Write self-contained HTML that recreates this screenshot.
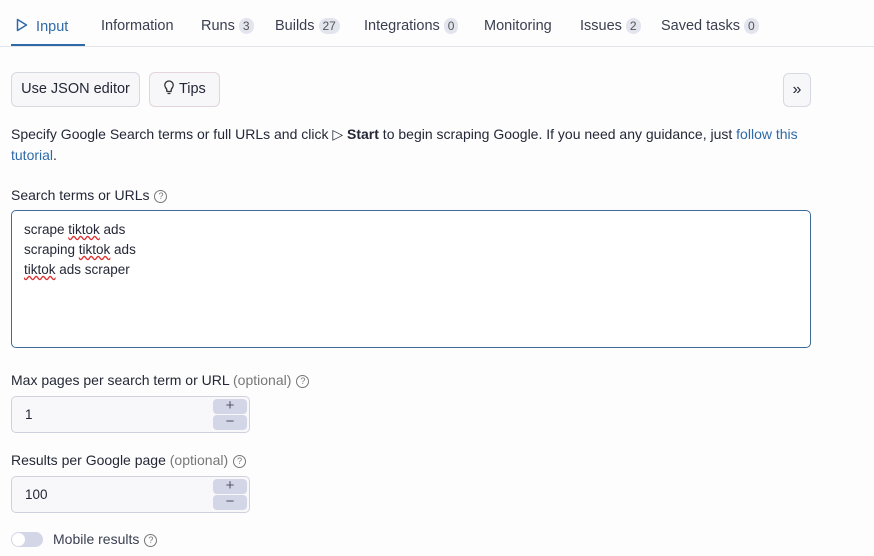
<!DOCTYPE html><html><head><style>
body{margin:0;width:874px;height:556px;background:#fdfdfe;font-family:"Liberation Sans",sans-serif;color:#242836;position:relative;overflow:hidden;font-size:14px}
.a{position:absolute;white-space:nowrap}
.tab{position:absolute;top:18px;font-size:14.5px;color:#3a3f4f}
.b{display:inline-block;background:#e2e4ee;color:#555;font-size:12px;border-radius:8px;padding:1px 4px;margin-left:4px}
.btn{position:absolute;border:1px solid #d6d9e2;border-radius:6px;background:#f7f7fa;font-size:14.5px;box-sizing:border-box}
.q{display:inline-block;width:11px;height:11px;border:1px solid #777;border-radius:50%;font-size:9px;text-align:center;line-height:11px;color:#777;vertical-align:1px;margin-left:5px}
.num{position:absolute;left:11px;width:239px;height:37px;border:1px solid #cfd2dc;border-radius:5px;background:#f8f8fb;box-sizing:border-box}
.sp{position:absolute;right:2px;width:34px;height:15px;background:#d3d6e6;border-radius:4px;color:#556;text-align:center;font-size:15px;line-height:14px}
.opt{color:#777}
</style></head><body>
<div class="tab" style="left:16px;color:#2f6aa8"><svg width="12" height="14" viewBox="0 0 12 14" style="vertical-align:-1px"><path d="M1.5 1.5L10.5 7L1.5 12.5Z" fill="none" stroke="#2f6aa8" stroke-width="1.5" stroke-linejoin="round"/></svg>&nbsp; Input</div>
<div style="position:absolute;left:11px;top:44px;width:74px;height:3px;background:#2f6aa8"></div>
<div style="position:absolute;left:0;top:46px;width:874px;height:1px;background:#e3e5eb"></div>
<div class="tab" style="left:101px">Information</div>
<div class="tab" style="left:201px">Runs<span class="b">3</span></div>
<div class="tab" style="left:275px">Builds<span class="b">27</span></div>
<div class="tab" style="left:364px">Integrations<span class="b">0</span></div>
<div class="tab" style="left:484px">Monitoring</div>
<div class="tab" style="left:580px">Issues<span class="b">2</span></div>
<div class="tab" style="left:661px">Saved tasks<span class="b">0</span></div>
<div class="btn" style="left:11px;top:72px;width:129px;height:35px;line-height:33px;text-align:center">Use JSON editor</div>
<div class="btn" style="left:149px;top:72px;width:71px;height:35px;line-height:33px;text-align:center;border-color:#e4d4dc"><svg width="12" height="15" viewBox="0 0 12 15" style="vertical-align:-2px"><path d="M4 11.5Q4 9 2.5 7.5A4.2 4.2 0 1 1 9.5 7.5Q8 9 8 11.5ZM4.5 13.5H7.5" fill="none" stroke="#333" stroke-width="1.3"/></svg> Tips</div>
<div class="btn" style="left:783px;top:73px;width:28px;height:34px;line-height:32px;text-align:center;font-size:16px">»</div>
<div class="a" style="left:11px;top:124px;font-size:14px;line-height:21px;white-space:normal;width:800px">Specify Google Search terms or full URLs and click ▷ <b>Start</b> to begin scraping Google. If you need any guidance, just <span style="color:#2f6aa8">follow this tutorial</span>.</div>
<div class="a" style="left:11px;top:187px;font-size:14px">Search terms or URLs<span class="q">?</span></div>
<div style="position:absolute;left:11px;top:210px;width:800px;height:138px;border:1px solid #3e6c99;border-radius:5px;box-sizing:border-box;background:#fff"></div>
<div class="a" style="left:24px;top:220px;font-size:13.5px;line-height:20px">scrape <u style="text-decoration:underline wavy #d33">tiktok</u> ads<br>scraping <u style="text-decoration:underline wavy #d33">tiktok</u> ads<br><u style="text-decoration:underline wavy #d33">tiktok</u> ads scraper</div>
<div class="a" style="left:11px;top:372px">Max pages per search term or URL <span class="opt">(optional)</span><span class="q">?</span></div>
<div class="num" style="top:396px"><span class="a" style="left:13px;top:10px;font-size:13.5px">1</span><div class="sp" style="top:2px">+</div><div class="sp" style="top:18px">−</div></div>
<div class="a" style="left:11px;top:452px">Results per Google page <span class="opt">(optional)</span><span class="q">?</span></div>
<div class="num" style="top:476px"><span class="a" style="left:13px;top:10px;font-size:13.5px">100</span><div class="sp" style="top:2px">+</div><div class="sp" style="top:18px">−</div></div>
<div style="position:absolute;left:11px;top:532px;width:32px;height:15px;border-radius:8px;background:#d3d6e6"><div style="position:absolute;left:1px;top:1px;width:13px;height:13px;border-radius:50%;background:#fff"></div></div>
<div class="a" style="left:53px;top:531px;color:#3a3f4f">Mobile results<span class="q">?</span></div>
</body></html>
